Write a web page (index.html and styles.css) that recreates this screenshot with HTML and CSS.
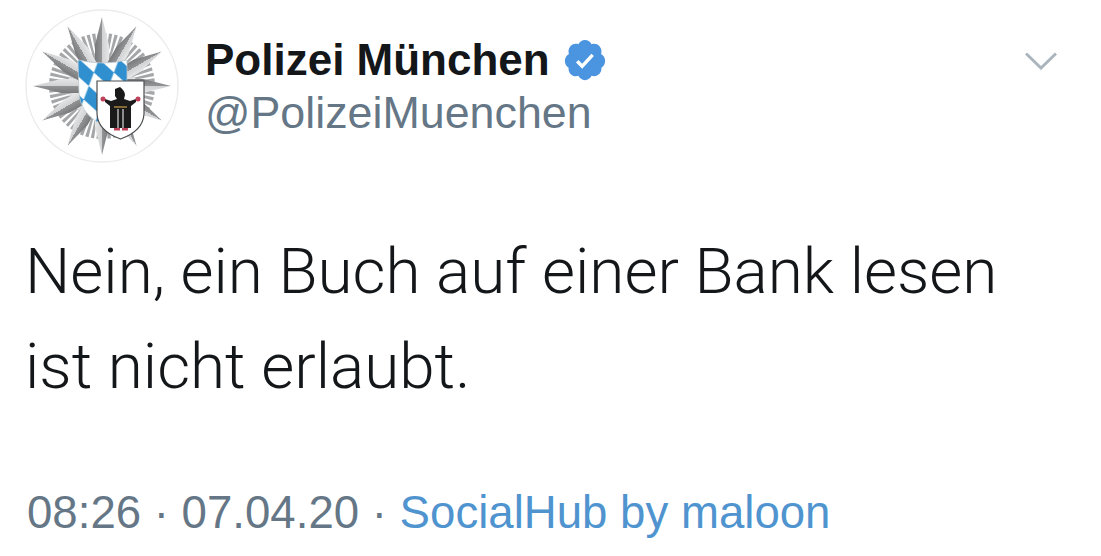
FILE: index.html
```html
<!DOCTYPE html>
<html lang="en">
<head>
    <meta charset="UTF-8">
    <meta name="viewport" content="width=device-width, initial-scale=1.0">
    <title>Polizei München Tweet</title>
    <link rel="stylesheet" href="styles.css">
</head>
<body>

    <article class="tweet">

        <!-- Author row -->
        <header class="tweet-head">
            <svg class="avatar" viewBox="0 0 154 154" aria-hidden="true">
                <defs>
                    <linearGradient id="ray-shade" x1="0" x2="1" y1="0" y2="0">
                        <stop offset="0" stop-color="#77797b"/>
                        <stop offset="0.5" stop-color="#929496"/>
                        <stop offset="0.5" stop-color="#d0d1d2"/>
                        <stop offset="1" stop-color="#e6e6e7"/>
                    </linearGradient>
                    <path id="ray" d="M77 8 L84 36 L84 60 L70 60 L70 36 Z" fill="url(#ray-shade)"/>
                    <pattern id="lozenges" width="20" height="27" patternUnits="userSpaceOnUse" patternTransform="translate(44 50) skewX(20)">
                        <rect width="20" height="27" fill="#fff"/>
                        <path d="M10 0 L20 13.500 L10 27 L0 13.500 Z" fill="#2f8fcf"/>
                    </pattern>
                </defs>
                <circle cx="77" cy="77" r="76" fill="#fff" stroke="#eaecee" stroke-width="1.500"/>
                <!-- star made of short rays and twelve long ones -->
                <circle cx="77" cy="77" r="34" fill="#c9cacb"/>
                <circle class="rays-outer" cx="77" cy="77" r="40"/>
                <circle class="rays-inner" cx="77" cy="77" r="30"/>
                <g>
                    <use href="#ray"/>
                    <use href="#ray" transform="rotate(30 77 77)"/>
                    <use href="#ray" transform="rotate(60 77 77)"/>
                    <use href="#ray" transform="rotate(90 77 77)"/>
                    <use href="#ray" transform="rotate(120 77 77)"/>
                    <use href="#ray" transform="rotate(150 77 77)"/>
                    <use href="#ray" transform="rotate(180 77 77)"/>
                    <use href="#ray" transform="rotate(210 77 77)"/>
                    <use href="#ray" transform="rotate(240 77 77)"/>
                    <use href="#ray" transform="rotate(270 77 77)"/>
                    <use href="#ray" transform="rotate(300 77 77)"/>
                    <use href="#ray" transform="rotate(330 77 77)"/>
                </g>
                <!-- Bavarian shield -->
                <path d="M53 51 Q78 57 102 51 V92 L72 113 Q55 102 54 84 Z" fill="url(#lozenges)" stroke="#b9c8d2" stroke-width="0.800"/>
                <!-- Munich shield with the monk -->
                <path d="M72 72 H119 V105 Q118 122 95.500 130 Q73 122 72 105 Z" fill="#fff" stroke="#4b4e50" stroke-width="1.200"/>
                <path d="M95 78 L90 80 L90 87 L92 90 L86 92 L80 90 L80 93 L85 97 L85 119 H92.500 V100 H93.500 V119 H97.500 V100 H98.500 V119 H106 V97 L111 93 L111 90 L105 92 L99 90 L100 86 Q100 82 95 78 Z" fill="#1b1a1a"/>
                <path d="M89 98 H102" stroke="#c9a04a" stroke-width="1.200"/>
                <circle cx="78" cy="90" r="2.500" fill="#c0425a"/>
                <circle cx="113" cy="90" r="2.500" fill="#c0425a"/>
                <path d="M89 119 h6 v2.500 h-6z M97 119 h6 v2.500 h-6z" fill="#c0425a"/>
            </svg>

            <div class="author">
                <div class="author-name">
                    <span>Polizei München</span>
                    <svg class="badge" viewBox="0 0 24 24" aria-hidden="true">
                        <path fill="#4a94e0" d="M22.500 12.500c0-1.580-.875-2.950-2.148-3.600.154-.435.238-.905.238-1.400 0-2.210-1.710-3.998-3.818-3.998-.470 0-.920.084-1.336.250C14.818 2.415 13.510 1.500 12 1.500s-2.816.917-3.437 2.250c-.415-.165-.866-.250-1.336-.250-2.110 0-3.818 1.790-3.818 4 0 .494.083.964.237 1.400-1.272.650-2.147 2.018-2.147 3.600 0 1.495.782 2.798 1.942 3.486-.020.170-.032.340-.032.514 0 2.210 1.708 4 3.818 4 .470 0 .920-.086 1.335-.250.620 1.334 1.926 2.250 3.437 2.250 1.512 0 2.818-.916 3.437-2.250.415.163.865.248 1.336.248 2.110 0 3.818-1.790 3.818-4 0-.174-.012-.344-.033-.513 1.158-.687 1.943-1.990 1.943-3.484z"/>
                        <path fill="#fff" d="M10.540 16.500 7.300 13.300l1.250-1.250 1.950 1.900 4.850-5.250 1.300 1.150z"/>
                    </svg>
                </div>
                <div class="author-handle">@PolizeiMuenchen</div>
            </div>

            <svg class="chevron" viewBox="0 0 32 18" aria-hidden="true">
                <path d="M1 1.500 L16 16 L31 1.500" fill="none" stroke="#aab5bd" stroke-width="3"/>
            </svg>
        </header>

        <!-- Tweet text -->
        <p class="tweet-text">Nein, ein Buch auf einer Bank lesen<br>ist nicht erlaubt.</p>

        <!-- Time and source -->
        <footer class="tweet-meta">08:26 · 07.04.20 · <span class="source">SocialHub by maloon</span></footer>

    </article>

</body>
</html>
```

FILE: styles.css
```css
/* General styling */
body {
    margin: 0;
    background-color: #fff;
    font-family: "Liberation Sans", Arial, sans-serif;
    overflow: hidden;
}

.tweet {
    height: 556px;
    padding: 9px 44px 0 25px;
    box-sizing: border-box;
}

/* Author row */
.tweet-head {
    display: flex;
    align-items: flex-start;
}

.avatar {
    width: 154px;
    height: 154px;
    flex-shrink: 0;
    filter: blur(0.4px);
}

.rays-outer {
    fill: none;
    stroke: #a4a6a8;
    stroke-width: 26;
    stroke-dasharray: 2.500 1.800;
}

.rays-inner {
    fill: none;
    stroke: #e2e2e3;
    stroke-width: 8;
    stroke-dasharray: 2 3;
}

.author {
    flex: 1;
    padding: 24px 0 0 26px;
}

.author-name {
    display: flex;
    align-items: center;
    gap: 12px;
    height: 53px;
    font-size: 44px;
    font-weight: 700;
    color: #14171a;
}

.badge {
    width: 46px;
    height: 46px;
}

.author-handle {
    height: 52px;
    font-size: 44.800px;
    line-height: 52px;
    color: #657786;
}

.chevron {
    width: 32px;
    height: 18px;
    margin-top: 43px;
}

/* Tweet text */
.tweet-text {
    margin: 61px 0 0;
    font-family: Roboto, "Liberation Sans", sans-serif;
    font-size: 63.800px;
    font-weight: 300;
    line-height: 95px;
    color: #14171a;
}

/* Time and source */
.tweet-meta {
    margin-top: 74px;
    padding-left: 2px;
    font-size: 45.600px;
    line-height: 50px;
    color: #657786;
}

.source {
    color: #4f94cf;
}
```
